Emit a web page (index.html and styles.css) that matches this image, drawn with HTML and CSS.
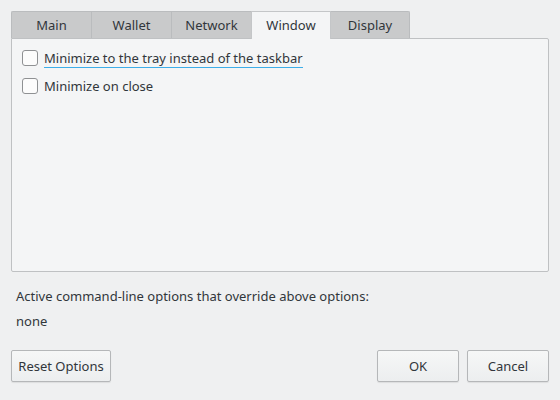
FILE: index.html
```html
<!DOCTYPE html>
<html>
<head>
<meta charset="utf-8">
<link rel="stylesheet" href="styles.css">
</head>
<body>
<div class="dialog">
  <div class="tabs">
    <div class="tab">Main</div>
    <div class="tab">Wallet</div>
    <div class="tab">Network</div>
    <div class="tab active">Window</div>
    <div class="tab last">Display</div>
  </div>
  <div class="pane">
    <label class="opt focus"><span class="box"></span><span class="lbl">Minimize to the tray instead of the taskbar</span></label>
    <label class="opt"><span class="box"></span><span class="lbl">Minimize on close</span></label>
  </div>
  <p class="info">Active command-line options that override above options:</p>
  <p class="none">none</p>
  <div class="buttons">
    <button class="btn reset">Reset Options</button>
    <div class="spacer"></div>
    <button class="btn ok">OK</button>
    <button class="btn">Cancel</button>
  </div>
</div>
</body>
</html>
```
FILE: styles.css
```css
html, body {
  margin: 0;
  padding: 0;
  background: #eff0f1;
  font-family: "Noto Sans", "Open Sans", sans-serif;
  font-size: 13px;
  color: #31363b;
}
.dialog {
  width: 560px;
  height: 400px;
  padding: 11px 11px 0 11px;
  box-sizing: border-box;
  display: flex;
  flex-direction: column;
}
.tabs {
  display: flex;
  height: 27px;
}
.tab {
  width: 80px;
  box-sizing: border-box;
  background: #c9cacb;
  border-top: 1px solid #babcbe;
  border-left: 1px solid #babcbe;
  display: flex;
  align-items: center;
  justify-content: center;
  padding-bottom: 1px;
}
.tab:first-child { border-top-left-radius: 2px; }
.tab.last {
  width: 79px;
  border-right: 1px solid #babcbe;
  border-top-right-radius: 2px;
}
.tab.active {
  background: #f4f5f6;
  border-top-color: #c4c6c8;
  border-left-color: #c4c6c8;
  border-right: 1px solid #c4c6c8;
  position: relative;
  z-index: 1;
  margin-bottom: -1px;
  height: 28px;
  padding-bottom: 2px;
}
.tab.active + .tab { border-left: none; }
.pane {
  height: 234px;
  box-sizing: border-box;
  background: #f4f5f6;
  border: 1px solid #bfc1c3;
  border-radius: 0 2px 2px 2px;
  padding: 10px 10px;
  display: flex;
  flex-direction: column;
  gap: 10px;
}
.opt {
  display: flex;
  align-items: center;
  height: 18px;
}
.box {
  width: 16px;
  height: 16px;
  box-sizing: border-box;
  border: 1px solid #8f9193;
  border-radius: 3px;
  background: #fcfcfc;
  margin-right: 6px;
}
.focus .lbl {
  border-bottom: 1px solid #3daee9;
  line-height: 17px;
  margin-top: 2px;
}
.info {
  margin: 15px 0 0 5px;
  line-height: 18px;
}
.none {
  margin: 7px 0 0 5px;
  line-height: 18px;
}
.buttons {
  display: flex;
  margin-top: 20px;
  gap: 8px;
}
.spacer { flex: 1; }
.btn {
  font-family: inherit;
  font-size: 13px;
  color: #31363b;
  height: 32px;
  width: 82px;
  border: 1px solid #b5b7b9;
  border-radius: 2px;
  background: linear-gradient(#f6f7f7, #eceeef);
  box-shadow: 0 1px 1px rgba(0,0,0,0.08);
  padding: 0;
}
.btn.reset { width: 100px; }
```
